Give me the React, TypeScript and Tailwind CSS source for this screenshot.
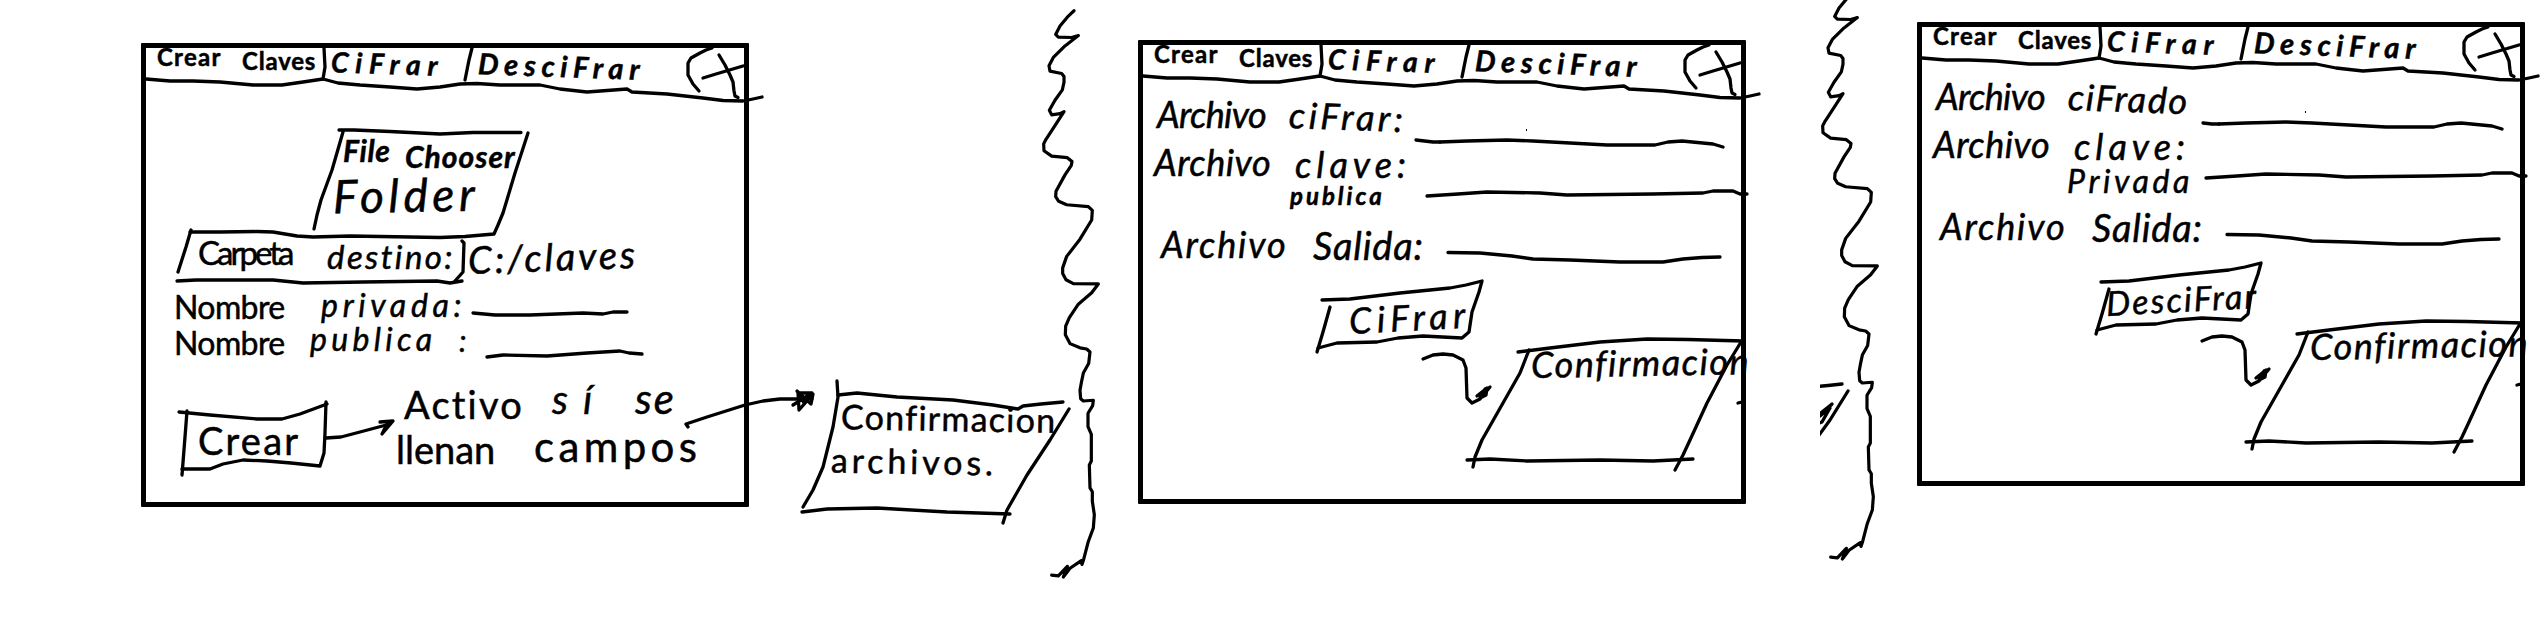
import { useLayoutEffect, useRef, useState } from "react";
import type { ReactNode } from "react";

/* One handwritten word: the letters are spread over the width of its box. */
function Word({ children, className }: { children: string; className: string }) {
  const box = useRef<HTMLSpanElement>(null);
  const ink = useRef<HTMLSpanElement>(null);
  const [spacing, setSpacing] = useState(0);

  useLayoutEffect(() => {
    if (!box.current || !ink.current || children.length < 2) return;
    const natural = ink.current.offsetWidth - spacing * children.length;
    setSpacing((box.current.clientWidth - natural) / (children.length - 1));
  }, [children]);

  return (
    <span ref={box} className={`block shrink-0 whitespace-pre leading-none ${className}`}>
      <span ref={ink} className="inline-block" style={{ letterSpacing: `${spacing}px` }}>
        {children}
      </span>
    </span>
  );
}

function Strokes({ lines }: { lines: string[] }) {
  return (
    <g fill="none" stroke="black" strokeWidth="3.3" strokeLinecap="round" strokeLinejoin="round">
      {lines.map((points) => (
        <polyline key={points} points={points} />
      ))}
    </g>
  );
}

const headerLines = [
  "5,36 29,38 52,38 79,39 112,42 141,42 162,39 182,36 197,40 219,42 249,44 276,46 299,44 319,41 336,40.5 359,42 399,42 419,46 446,49 486,46 491,49 526,51 562,55 582,57.5 602,58 612,56 621,54",
  "183,5 184,24 182,36",
  "331,5 328,17 324,37",
  "571,5 565,7 559,10 550,15 547,20 547,32 552,41 558,48",
  "578,12 584,22 589,32 592,39 593,48 594,53 597,54.5",
  "562,35 575,31 602,23",
];

const createLines = [
  "198,87 213,87 249,88.5 299,91 332,89.5 380,89.5",
  "202,89 191,127 180,157 176,172 173,186",
  "387,90 374,130 362,170 357,182 353,191 324,193.5 299,194.5 209,193 172,194 156,193 132,189 116,188.5 79,189 49,189",
  "50,187 45,204 37,229",
  "36,238 55,237 132,237 162,240 222,239 296,238 309,240 321,238",
  "321,198 323,200 322,229 314,238",
  "332,270 354,272 389,272 442,270 462,271 472,269 486,269",
  "346,314 362,312 406,313 446,310 479,308 488,310 501,311",
  "38,369 69,372 116,376 141,376 159,371 186,361",
  "46,368 44,394 41,432",
  "41,426 69,426 82,421 102,417 126,418 150,420 179,423 183,410 184,390 185,359",
  "185,395 200,394 219,389 249,381",
  "239,379 252,378 241,391 246,381 250,379",
  "547,384 545,381 566,374 604,362 622,358 639,356 671,356",
  "652,362 671,350 657,350 658,367 672,351 670,361 656,348 663,360 668,352",
];

const noteLines = [
  "696,338 697,354 692,384 682,424 672,447 662,464",
  "697,352 716,350 756,354 812,357 852,362 877,366 882,363 900,361 922,359",
  "928,366 909,397 886,432 866,467 862,480",
  "661,469 686,466 736,465 806,469 869,471",
];

const formLines = [
  "302,102 329,101 369,100 395,101 432,103 469,105 517,105 530,102 544,101 575,104 585,107",
  "289,156 320,154 349,152 402,153 429,155 515,154 565,153 575,151 595,151 602,154 609,154",
  "310,212.5 342,213 374,216 395,219 432,220 482,222 525,222 545,219 564,217.5 582,217",
  "184,260 212,259 262,253 312,248 328,245 344,241 341,252 334,272 331,292 324,298 285,296 260,298 239,302 199,303 180,308",
  "192,267 185,292 179,312",
  "285,319 295,315 305,314 315,315 325,320 328,328 329,358 334,363 342,359 352,347 339,356 349,348 348,355 342,358 347,349",
  "380,312 412,308 462,302 509,299 550,299.5 605,301",
  "391,310 382,333 365,363 344,400 337,417 335,427",
  "329,420 352,419 389,421 462,420 515,421 555,419",
  "603,302 589,325 569,363 552,400 545,415 537,430",
  "600,363 604,362",
];

const wave =
  "132,28 115,42 90,68 77,90 85,97 125,98 145,93 105,120 70,150 57,172 60,186 95,192 102,200 102,215 97,235 75,262 58,288 65,300 90,297 102,292 70,335 48,364 41,376 42,394 65,408 112,412 126,422 124,432 105,457 78,500 77,514 86,526 110,535 175,540 187,550 185,575 150,625 110,670 98,700 98,715 108,731 130,741 205,742 185,765 145,795 118,830 107,852 106,875 120,898 150,909 170,912 180,920 176,950 160,975 154,1000 150,1020 152,1042 160,1048 190,1046 188,1060 174,1080 174,1115 184,1135 184,1205 178,1215 180,1275 187,1285 187,1310 193,1345 190,1380 175,1415 160,1465 156,1475 154,1465 120,1485 100,1508 112,1480 85,1505 65,1503";

function Wave({ className }: { className: string }) {
  return (
    <svg className={`block h-[600px] w-[120px] ${className}`} viewBox="0 0 360 1568" preserveAspectRatio="none">
      <polyline
        points={wave}
        fill="none"
        stroke="black"
        strokeWidth="3.2"
        strokeLinecap="round"
        strokeLinejoin="round"
        vectorEffect="non-scaling-stroke"
      />
    </svg>
  );
}

function Screen({ className, lines, children }: { className: string; lines: string[]; children: ReactNode }) {
  return (
    <section className={`relative flex h-[464px] w-[608px] shrink-0 flex-col rounded-[1px] border-[5px] border-black ${className}`}>
      <nav className="flex h-11 items-start text-[24px] font-bold">
        <Word className="-mt-[3px] ml-[11px] w-[63px]">Crear</Word>
        <Word className="mt-px ml-[22px] w-[73px]">Claves</Word>
        <Word className="mt-px ml-[16px] w-[107px] rotate-2 text-[28px] italic">CiFrar</Word>
        <Word className="mt-[3px] ml-[40px] w-[162px] rotate-2 text-[29px] italic">DesciFrar</Word>
      </nav>
      {children}
      <svg className="pointer-events-none absolute -top-[5px] -left-[5px] h-[464px] w-[608px] overflow-visible" viewBox="0 0 608 464">
        <Strokes lines={headerLines} />
        <Strokes lines={lines} />
      </svg>
    </section>
  );
}

function CreateKeys() {
  return (
    <Screen className="mt-[43px] ml-[141px]" lines={createLines}>
      <div className="mt-[46px] flex h-10 items-start text-[30px] font-bold italic">
        <Word className="-mt-[3px] ml-[197px] w-[47px]">File</Word>
        <Word className="mt-[3px] ml-[15px] w-[110px]">Chooser</Word>
      </div>
      <div className="flex h-[60px] items-start text-[46px] italic">
        <Word className="-mt-[6px] ml-[187px] w-[142px] -rotate-1">Folder</Word>
      </div>
      <div className="flex h-[50px] items-start text-[33px]">
        <Word className="-mt-[2px] ml-[52px] w-[97px]">Carpeta</Word>
        <Word className="mt-[2px] ml-[32px] w-[125px] italic">destino:</Word>
        <Word className="-mt-px ml-[16px] w-[167px] -rotate-2 text-[38px] italic">C:/claves</Word>
      </div>
      <div className="flex h-9 items-start text-[32px]">
        <Word className="mt-[3px] ml-[28px] w-[111px]">Nombre</Word>
        <Word className="mt-px ml-[36px] w-[141px] italic">privada:</Word>
      </div>
      <div className="flex h-16 items-start text-[32px]">
        <Word className="mt-[3px] ml-[28px] w-[111px]">Nombre</Word>
        <Word className="-mt-px ml-[25px] w-[122px] italic">publica</Word>
        <Word className="mt-px ml-[27px] w-[8px] text-[30px] italic">:</Word>
      </div>
      <div className="flex h-[45px] items-start text-[38px]">
        <Word className="-mt-[3px] ml-[258px] w-[118px]">Activo</Word>
        <Word className="-mt-[9px] ml-[30px] w-[40px] text-[40px] italic">sí</Word>
        <Word className="-mt-[11px] ml-[43px] w-[39px] text-[42px] italic">se</Word>
      </div>
      <div className="flex items-start text-[38px]">
        <Word className="-mt-[12px] ml-[52px] w-[100px]">Crear</Word>
        <Word className="-mt-[3px] ml-[98px] w-[99px]">llenan</Word>
        <Word className="-mt-[8px] ml-[39px] w-[163px] text-[42px]">campos</Word>
      </div>
    </Screen>
  );
}

function Note() {
  return (
    <aside className="relative flex h-[630px] w-[281px] shrink-0 flex-col pt-[401px]">
      <Word className="ml-[92px] w-[214px] rotate-1 text-[34px]">Confirmacion</Word>
      <Word className="mt-[9px] ml-[82px] w-[162px] rotate-1 text-[34px]">archivos.</Word>
      <svg className="absolute top-0 left-0 h-[630px] w-[281px] overflow-visible" viewBox="608 -43 281 630">
        <Strokes lines={noteLines} />
      </svg>
    </aside>
  );
}

type FormProps = { className: string; lines: string[]; source: ReactNode; keyKind: ReactNode; action: ReactNode };

function FileForm({ className, lines, source, keyKind, action }: FormProps) {
  return (
    <Screen className={className} lines={[...lines, ...formLines]}>
      <div className="mt-[6px] flex h-[50px] items-start text-[36px] italic">
        <Word className="mt-px ml-[14px] w-[110px]">Archivo</Word>
        {source}
      </div>
      <div className="flex h-[35px] items-start text-[36px] italic">
        <Word className="-mt-px ml-[11px] w-[117px]">Archivo</Word>
        <Word className="mt-px ml-[24px] w-[111px]">clave:</Word>
      </div>
      <div className="flex h-[45px] items-start italic">{keyKind}</div>
      <div className="flex h-[70px] items-start text-[36px] italic">
        <Word className="mt-px ml-[18px] w-[125px]">Archivo</Word>
        <Word className="mt-px ml-[27px] w-[110px] text-[38px]">Salida:</Word>
      </div>
      <div className="flex h-[50px] items-start text-[34px] italic">{action}</div>
      <div className="flex items-start text-[36px] italic">
        <Word className="-mt-px ml-[388px] w-[217px] -rotate-1">Confirmacion</Word>
      </div>
      <svg className="absolute top-[84px] left-[383px] h-[2px] w-px" viewBox="0 0 1 2">
        <rect width="1" height="2" />
      </svg>
    </Screen>
  );
}

export default function App() {
  return (
    <main className="flex h-[630px] w-[2546px] items-start overflow-hidden bg-white font-['Lato',sans-serif] text-black [-webkit-text-stroke:0.5px_black]">
      <CreateKeys />
      <Note />
      <div className="w-[108px] shrink-0">
        <Wave className="" />
      </div>
      <FileForm
        className="mt-[40px]"
        lines={["278,100 295,102 302,102"]}
        source={<Word className="mt-[3px] ml-[22px] w-[114px] rotate-2">ciFrar:</Word>}
        keyKind={<Word className="mt-[4px] ml-[147px] w-[92px] text-[24px] font-bold">publica</Word>}
        action={<Word className="mt-[4px] ml-[206px] w-[116px] -rotate-3 text-[36px]">CiFrar</Word>}
      />
      <div className="relative ml-[63px] w-[108px] shrink-0">
        <Wave className="-mt-[18px]" />
        <svg className="absolute top-[380px] left-[11px] h-[60px] w-[34px] overflow-hidden" viewBox="0 0 34 60">
          <Strokes lines={["-3,6.5 8,5.5 22,4", "-6,62 10,40 28,11", "-6,38 2,32 12,24 0,36 10,28 2,42 -4,44"]} />
        </svg>
      </div>
      <FileForm
        className="mt-[22px]"
        lines={["286,101 295,102 302,102"]}
        source={<Word className="mt-[3px] ml-[22px] w-[119px] rotate-2">ciFrado</Word>}
        keyKind={<Word className="mt-[3px] ml-[145px] w-[122px] text-[32px]">Privada</Word>}
        action={<Word className="mt-[5px] ml-[184px] w-[150px] -rotate-3">DesciFrar</Word>}
      />
    </main>
  );
}
